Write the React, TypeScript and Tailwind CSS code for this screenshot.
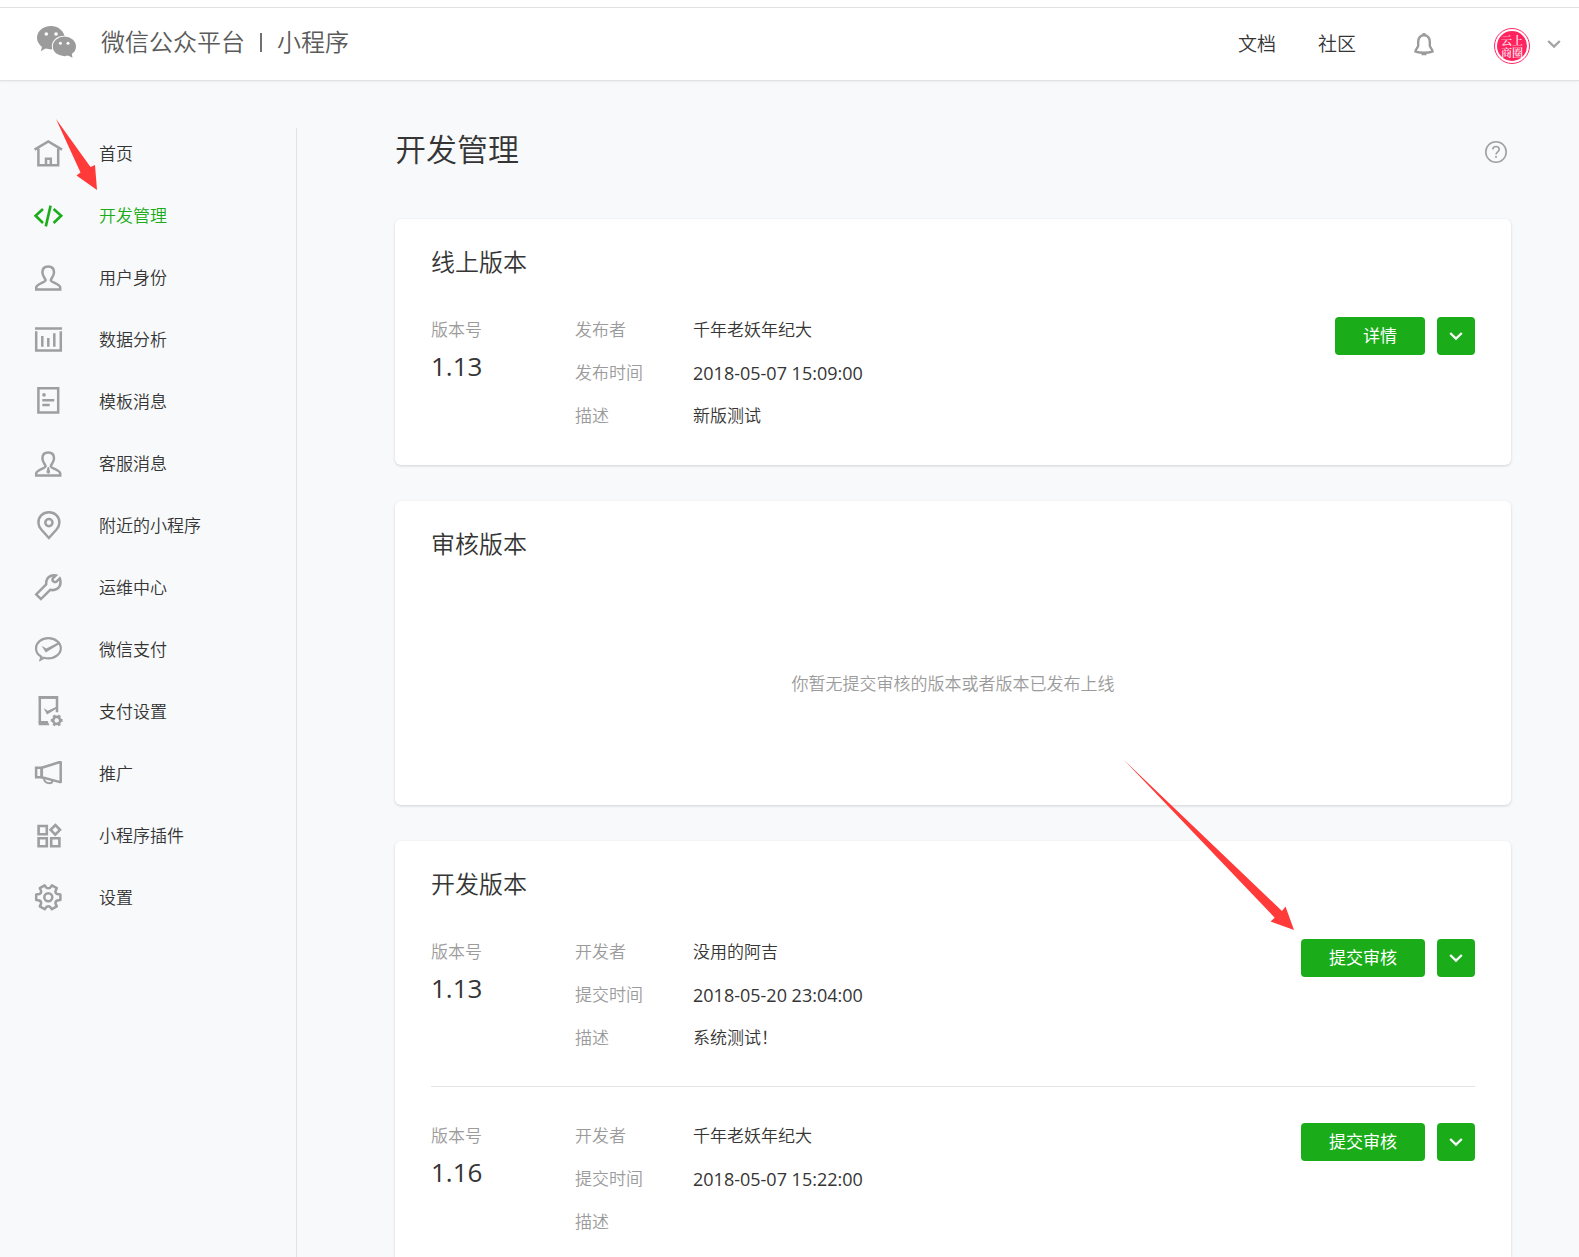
import React from "react";

type IconName =
  | "home" | "code" | "user" | "chart" | "template" | "service" | "pin"
  | "wrench" | "pay" | "paySettings" | "horn" | "plugin" | "gear";

const PERSON =
  "M12.6 17.2C12.6 15.5 9.4 13.5 9.4 9.2C9.4 5.5 11.8 3.4 15.2 3.4S21 5.5 21 9.2C21 13.5 17.8 15.5 17.8 17.2C17.8 19.2 27.2 21 27.2 24.4V26.5H3.2V24.4C3.2 21 12.6 19.2 12.6 17.2Z";

const icons: Record<IconName, React.ReactNode> = {
  home: (
    <>
      <path d="M1.6 10.6L15.3 2.5L29 10.6" />
      <path d="M5.4 9.5V26.2H25.2V9.5" />
      <path d="M13 26V19.7H17.8V26" />
    </>
  ),
  code: (
    <g strokeWidth="2.6">
      <path d="M10 8L2.6 14.8L10 22" />
      <path d="M17.6 4.6L12.8 25.4" />
      <path d="M20.6 8L28.2 14.8L20.6 22" />
    </g>
  ),
  user: <path d={PERSON} />,
  chart: (
    <>
      <path d="M2 3.5H29M3.2 6.3V25.6H27.8V6.3" />
      <path d="M9.3 11V21.7M15.3 13V21.7M21.3 8.3V21.7" />
    </>
  ),
  template: (
    <>
      <path d="M5.4 1.2H25.2V25.6H5.4Z" />
      <path d="M9.3 13.3H21.3M9.3 18H16.7" />
      <circle cx="11" cy="7.9" r="1.8" fill="currentColor" stroke="none" />
    </>
  ),
  service: (
    <>
      <path d={PERSON} />
      <path d="M14.6 18H16L17.2 23.2L15.3 25L13.4 23.2Z" fill="currentColor" stroke="none" />
    </>
  ),
  pin: (
    <>
      <path d="M15.9 27L8.5 18.8C6.5 16.4 5.4 14 5.4 11.4C5.4 5.6 10 1.2 15.9 1.2S26.4 5.6 26.4 11.4C26.4 14 25.3 16.4 23.3 18.8Z" />
      <circle cx="15.9" cy="11.6" r="3.6" />
    </>
  ),
  wrench: (
    <path d="M3.2 21.4L7.9 26.1L17.2 16.8C21.6 18 27.5 15.4 27.5 9.5C27.5 7.6 27.3 6.3 26.8 5.4L23.4 8.8C21.4 9.6 18.8 8 19.6 5.6L22.8 2.4C17.6 1.2 12.6 4.8 13.2 11.4Z" />
  ),
  pay: (
    <>
      <path d="M7.6 24.6L8.3 21.6C5 19.8 3 16.7 3 13.2C3 7.6 8.5 3.1 15.3 3.1S27.8 7.6 27.8 13.2S22.2 23.3 15.3 23.3C13.8 23.3 12.4 23.1 11 22.7Z" strokeWidth="2.2" />
      <path d="M8.6 10.8L13.3 13.4L26.6 6.8L27.4 8.6L12.7 17.4Z" fill="currentColor" stroke="none" />
    </>
  ),
  paySettings: (
    <>
      <path d="M24 15.3V0.4H6.8V26.5" />
      <path d="M5.7 -1H25.1V1.8H5.7ZM5.7 24H14.6L16.4 28.3H5.7Z" fill="currentColor" stroke="none" />
      <path d="M10.6 11L14.7 13.8L23.4 9.8V11.8L14 17.6Z" fill="currentColor" stroke="none" />
      <circle cx="23.7" cy="23.4" r="3.5" strokeWidth="2.6" />
      <path d="M17.8 23.4H20.4M27 23.4H29.600M20.700 18.200L22 20.5M25.4 26.3L26.700 28.600M26.700 18.200L25.4 20.5M22 26.3L20.700 28.600" strokeWidth="2.8" />
    </>
  ),
  horn: (
    <>
      <path d="M3.1 8.7H8.6V18.3H3.1Z" />
      <path d="M8.8 8.7L26.2 3.3H27.7V22.9H26.2L8.8 18.3Z" strokeLinejoin="round" />
      <path d="M10.8 19C11.2 22.6 14 24.2 16.6 24.2C18.2 24.2 19.2 23.4 19.4 21.8" strokeWidth="2" />
    </>
  ),
  plugin: (
    <path d="M5.6 5H13.8V13.2H5.6ZM5.6 17.2H13.8V25.2H5.6ZM18.2 17.2H26.4V25.2H18.2ZM22.3 4L27 8.8L22.3 13.6L17.6 8.8Z" strokeWidth="2.6" />
  ),
  gear: (
    <>
      <path
        d="M27.4 17.1L24.2 17.5Q22.200 18.400 22.5 20.6L23.8 23.4L18.9 26.2L17.1 23.9Q15.300 22.800 13.5 23.9L11.7 26.2L6.8 23.4L8.1 20.6Q8.400 18.400 6.4 17.5L3.2 17.1V11.5L6.4 11.1Q8.400 10.200 8.1 8L6.8 5.2L11.7 2.4L13.5 4.7Q15.300 5.800 17.1 4.7L18.9 2.4L23.8 5.2L22.5 8Q22.200 10.200 24.2 11.1L27.4 11.5Z"
        strokeLinejoin="round"
      />
      <circle cx="15.3" cy="14.3" r="4" />
    </>
  ),
};

const menu: { icon: IconName; label: string; active?: boolean }[] = [
  { icon: "home", label: "首页" },
  { icon: "code", label: "开发管理", active: true },
  { icon: "user", label: "用户身份" },
  { icon: "chart", label: "数据分析" },
  { icon: "template", label: "模板消息" },
  { icon: "service", label: "客服消息" },
  { icon: "pin", label: "附近的小程序" },
  { icon: "wrench", label: "运维中心" },
  { icon: "pay", label: "微信支付" },
  { icon: "paySettings", label: "支付设置" },
  { icon: "horn", label: "推广" },
  { icon: "plugin", label: "小程序插件" },
  { icon: "gear", label: "设置" },
];

function MenuIcon({ name }: { name: IconName }) {
  return (
    <svg viewBox="0 0 30 30" fill="none" stroke="currentColor" strokeWidth="2.5" className="size-[30px] shrink-0 overflow-visible" aria-hidden="true">
      {icons[name]}
    </svg>
  );
}

function Chevron({ className }: { className: string }) {
  return (
    <svg viewBox="0 0 14 10" fill="none" stroke="currentColor" strokeWidth="2.3" className={className} aria-hidden="true">
      <path d="M1.200 2L7 7.600L12.800 2" />
    </svg>
  );
}

function Header() {
  return (
    <header className="flex h-[73px] items-center border-b border-[#dfe1e3] bg-white pr-[18px] pl-9 shadow-[0_1px_2px_rgba(0,0,0,0.05)]">
      <a href="#home" className="flex items-center text-2xl text-[#5a5a5a]">
        <svg viewBox="0 0 41 32" className="mb-1 h-8 w-[41px] text-[#9b9b9b]" aria-hidden="true">
          <path fill="currentColor" d="M15 0C6.900 0 1 5.200 1 11.800C1 15.500 2.900 18.700 6 20.900L4.800 25.200L9.600 22.600C11.300 23.100 13.100 23.400 15 23.400C15.400 23.400 15.900 23.400 16.300 23.300C14 15.500 20.500 9.500 28.500 9.700C27 4 21.500 0 15 0Z" />
          <ellipse fill="currentColor" cx="28.400" cy="20.400" rx="11.600" ry="9.800" />
          <path fill="currentColor" d="M31 29L36.500 31.800L35.500 26Z" />
          <g fill="#fff">
            <circle cx="10.300" cy="8" r="1.800" />
            <circle cx="20" cy="8" r="1.800" />
            <circle cx="24.400" cy="17.300" r="1.500" />
            <circle cx="32" cy="17.300" r="1.500" />
          </g>
        </svg>
        <span className="ml-6 flex items-center pb-1">
          微信公众平台
          <i className="mx-[15px] h-[19px] w-0.5 bg-[#707070]" />
          小程序
        </span>
      </a>
      <nav className="ml-auto flex items-center text-[19px] text-[#353535]">
        <a href="#docs">文档</a>
        <a href="#community" className="ml-[42px]">社区</a>
        <button type="button" aria-label="通知" className="ml-[58px] text-[#9b9b9b]">
          <svg viewBox="0 0 20 23" fill="none" stroke="currentColor" strokeWidth="2.400" className="h-[23px] w-5">
            <path d="M10 2.200C6.500 2.200 4.200 5 4.200 9V12.500C4.200 14.500 1.500 16 1.500 18.600C4 19.400 7 19.800 10 19.800S16 19.400 18.500 18.600C18.500 16 15.800 14.500 15.800 12.500V9C15.800 5 13.500 2.200 10 2.200Z" />
            <path d="M8.500 1.200H11.500M7.500 21H12.500" />
          </svg>
        </button>
        <button type="button" aria-label="账号" className="ml-[60px] flex items-center">
          <span className="mt-1 flex size-9 items-center justify-center rounded-full border border-[#ff2a68] bg-white">
            <span className="flex size-[30px] flex-col items-center justify-center rounded-full bg-[#ff2360] font-['Noto_Serif_CJK_SC','Noto_Sans_CJK_SC',serif] text-[11px] leading-3 font-medium text-white">
              云上
              <br />
              商圈
            </span>
          </span>
          <Chevron className="ml-[17px] h-[10px] w-[14px] text-[#a3a3a3]" />
        </button>
      </nav>
    </header>
  );
}

function Sidebar() {
  return (
    <aside className="relative mt-[47px] w-[297px] shrink-0 border-r border-[#e1e3e5]">
      <nav className="flex flex-col gap-8 pt-[11px] pl-[33px]">
        {menu.map((item) => (
          <a
            key={item.label}
            href={"#" + item.icon}
            className={item.active ? "flex items-center gap-9 text-[#1aad19]" : "flex items-center gap-9 text-[#353535]"}
          >
            <span className={item.active ? "text-[#1aad19]" : "text-[#9f9f9f]"}>
              <MenuIcon name={item.icon} />
            </span>
            {item.label}
          </a>
        ))}
      </nav>
      <svg viewBox="0 0 42 72" className="absolute -top-[9px] left-14 h-[72px] w-[42px]" aria-hidden="true">
        <path fill="#ff3a38" d="M0 0L34.500 48L39 46L41 71L20.500 56.500L24.500 53.500Z" />
      </svg>
    </aside>
  );
}

function Card({ title, last, children }: { title: string; last?: boolean; children: React.ReactNode }) {
  return (
    <section
      className={
        last
          ? "grow rounded-t-md bg-white px-9 pt-[26px] shadow-[0_1px_3px_rgba(0,0,0,0.16)]"
          : "mb-9 rounded-md bg-white px-9 pt-[26px] pb-9 shadow-[0_1px_3px_rgba(0,0,0,0.16)]"
      }
    >
      <h2 className="text-2xl leading-[34px] font-[350]">{title}</h2>
      {children}
    </section>
  );
}

interface Version {
  version: string;
  action: string;
  person: [string, string];
  time: [string, string];
  note: string;
  pointer?: boolean;
}

function VersionRow({ version, action, person, time, note, pointer }: Version) {
  return (
    <div className="flex items-start">
      <div className="w-36 shrink-0">
        <div className="leading-[26px] text-[#9b9b9b]">版本号</div>
        <div className="text-[26px] leading-[46px] font-normal">{version}</div>
      </div>
      <dl className="grid grow grid-cols-[118px_1fr] gap-y-[17px] leading-[26px]">
        <dt className="text-[#9b9b9b]">{person[0]}</dt>
        <dd>{person[1]}</dd>
        <dt className="text-[#9b9b9b]">{time[0]}</dt>
        <dd className="text-lg leading-[26px] font-normal">{time[1]}</dd>
        <dt className="text-[#9b9b9b]">描述</dt>
        <dd>{note}</dd>
      </dl>
      <div className="relative flex gap-3 text-white">
        <button type="button" className="h-[38px] rounded bg-[#1aad19] px-7 font-normal">{action}</button>
        <button type="button" aria-label="更多操作" className="flex size-[38px] items-center justify-center rounded bg-[#1aad19]">
          <Chevron className="h-[10px] w-[14px]" />
        </button>
        {pointer && (
          <svg viewBox="0 0 170 170" className="absolute right-[181px] -top-[179px] size-[170px]" aria-hidden="true">
            <path fill="#ff3a38" d="M0 0L158 151L161.500 146.500L170 170L146.500 161.500L150.700 157.700Z" />
          </svg>
        )}
      </div>
    </div>
  );
}

export default function App() {
  return (
    <div className="flex min-h-screen flex-col bg-[#f8f9fb] font-['Open_Sans','Noto_Sans_CJK_SC',sans-serif] text-[17px] font-[350] text-[#353535]">
      <div className="h-2 border-b border-[#e1e1e1] bg-white" />
      <Header />
      <div className="flex grow">
        <Sidebar />
        <main className="ml-[98px] flex grow flex-col pt-12 pr-[68px]">
          <div className="mb-[46px] flex items-center justify-between pr-1">
            <h1 className="pb-1 text-[31px] leading-[40px] font-[350]">开发管理</h1>
            <button type="button" aria-label="帮助" className="mt-0.5 text-[#a0a0a0]">
              <svg viewBox="0 0 22 22" fill="none" stroke="currentColor" strokeWidth="1.600" className="size-[22px]">
                <circle cx="11" cy="11" r="10.200" />
                <path d="M7.800 8.600C7.800 6.600 9.200 5.500 11 5.500S14.200 6.700 14.200 8.400C14.200 10.700 11 11 11 13.600" />
                <path d="M11 15V16.800" strokeWidth="1.800" />
              </svg>
            </button>
          </div>
          <Card title="线上版本">
            <div className="pt-[38px]">
              <VersionRow version="1.13" action="详情" person={["发布者", "千年老妖年纪大"]} time={["发布时间", "2018-05-07 15:09:00"]} note="新版测试" />
            </div>
          </Card>
          <Card title="审核版本">
            <p className="pt-[110px] pb-[72px] text-center leading-[26px] text-[#9b9b9b]">你暂无提交审核的版本或者版本已发布上线</p>
          </Card>
          <Card title="开发版本" last>
            <div className="border-b border-[#e4e4e4] pt-[38px] pb-[35px]">
              <VersionRow version="1.13" action="提交审核" pointer person={["开发者", "没用的阿吉"]} time={["提交时间", "2018-05-20 23:04:00"]} note="系统测试！" />
            </div>
            <div className="pt-9">
              <VersionRow version="1.16" action="提交审核" person={["开发者", "千年老妖年纪大"]} time={["提交时间", "2018-05-07 15:22:00"]} note="" />
            </div>
          </Card>
        </main>
      </div>
    </div>
  );
}
